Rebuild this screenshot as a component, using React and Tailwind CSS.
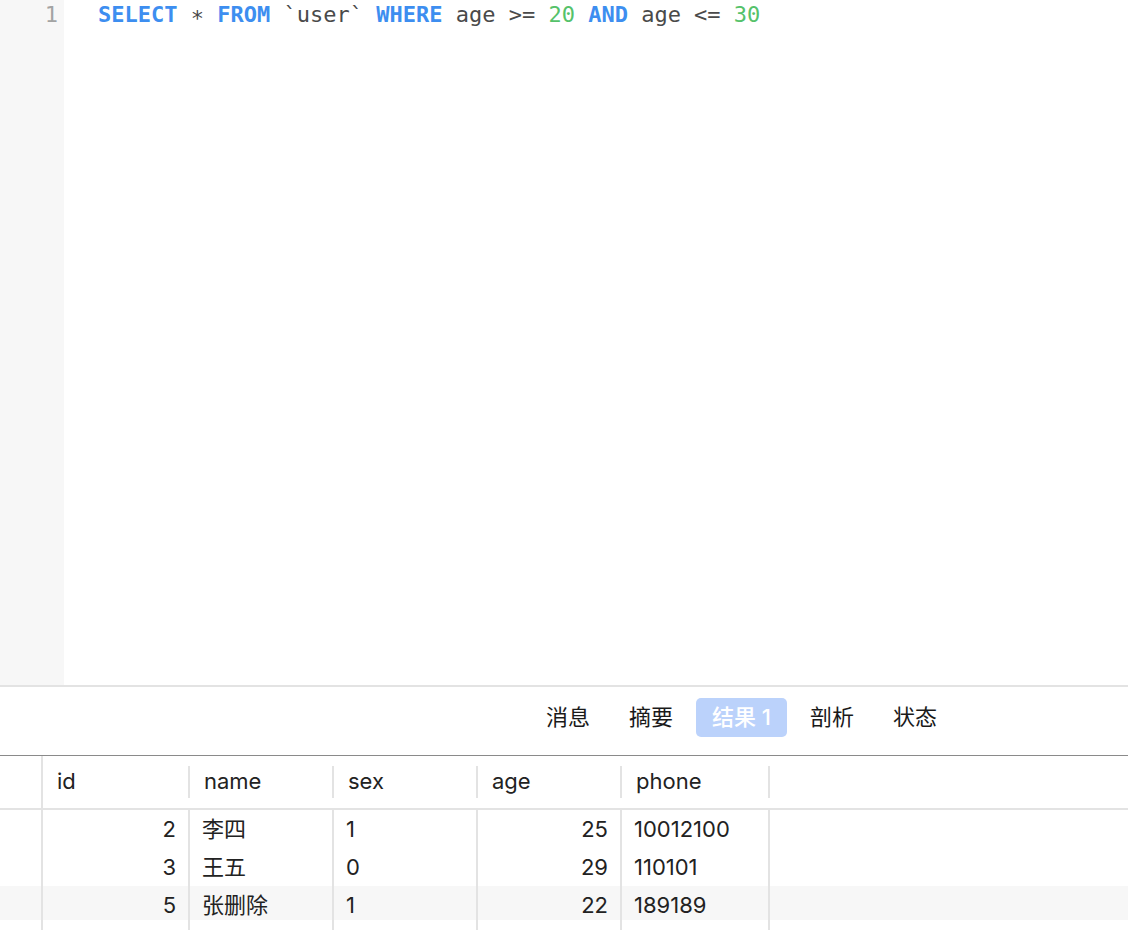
import React from "react";

const mono = { fontFamily: '"DejaVu Sans Mono", "Liberation Mono", monospace' };

function Code() {
  const kw = "text-[#3d8ef0] font-bold";
  const id = "text-[#4a4a4a]";
  const num = "text-[#55c26a]";
  return (
    <div className="flex h-[685px]">
      <div className="w-[64px] bg-[#f7f7f7] flex justify-end pr-[6px]">
        <div className="text-[22px] leading-[30px] text-[#a3a3a3]" style={mono}>1</div>
      </div>
      <div className="flex-1 pl-[34px]">
        <div className="text-[22px] leading-[30px] whitespace-pre" style={mono}>
          <span className={kw}>SELECT</span>
          <span className={id}> </span>
          <span className={id + " relative top-[4px]"}>*</span>
          <span className={id}> </span>
          <span className={kw}>FROM</span>
          <span className={id}> `user` </span>
          <span className={kw}>WHERE</span>
          <span className={id}> age &gt;= </span>
          <span className={num}>20</span>
          <span className={id}> </span>
          <span className={kw}>AND</span>
          <span className={id}> age &lt;= </span>
          <span className={num}>30</span>
        </div>
      </div>
    </div>
  );
}

const ui = { fontFamily: 'Inter, "Noto Sans CJK SC", sans-serif' };

function Tabs() {
  const tabs = ["消息", "摘要", "结果 1", "剖析", "状态"];
  return (
    <div className="h-[71px] border-t-2 border-t-[#e3e3e3] border-b border-b-[#8a8a8a] flex items-start justify-end pr-[175px] pt-[11px] gap-[7px]" style={ui}>
      {tabs.map((t) => (
        <div
          key={t}
          className={
            "h-[39px] px-4 rounded-[5px] flex items-center text-[22px] " +
            (t === "结果 1" ? "bg-[#bbd2fb] text-white font-medium" : "text-[#1a1a1a]")
          }
        >
          {t}
        </div>
      ))}
    </div>
  );
}

const cols = [
  { name: "id", w: "w-[147px]", right: true },
  { name: "name", w: "w-[144px]" },
  { name: "sex", w: "w-[144px]" },
  { name: "age", w: "w-[144px]", right: true },
  { name: "phone", w: "w-[148px]" },
];

const rows = [
  ["2", "李四", "1", "25", "10012100"],
  ["3", "王五", "0", "29", "110101"],
  ["5", "张删除", "1", "22", "189189"],
];

function Table() {
  return (
    <div className="text-[22px] text-[#222]" style={ui}>
      <div className="flex h-[54px] border-b-2 border-[#e3e3e3]">
        <div className="w-[43px] border-r-2 border-[#e3e3e3]" />
        {cols.map((c) => (
          <div key={c.name} className={c.w + " flex items-center justify-between pl-[14px]"}>
            <span className="pb-[2px]">{c.name}</span>
            <div className="w-[2px] h-[32px] bg-[#e3e3e3]" />
          </div>
        ))}
        <div className="flex-1" />
      </div>
      {rows.map((r, i) => (
        <div
          key={i}
          className={"flex " + (i === 2 ? "h-[34px] bg-[#f7f7f7]" : "h-[38px]")}
        >
          <div className="w-[43px] border-r-2 border-[#e3e3e3]" />
          {cols.map((c, j) => (
            <div
              key={j}
              className={
                c.w +
                " border-r-2 border-[#e3e3e3] flex items-center " +
                (c.right ? "justify-end pr-[12px]" : "pl-[12px]") +
                (i === 2 ? " pt-[4px]" : "")
              }
            >
              {r[j]}
            </div>
          ))}
          <div className="flex-1" />
        </div>
      ))}
      <div className="flex h-[20px]">
        <div className="w-[43px] border-r-2 border-[#e3e3e3]" />
        {cols.map((c, j) => (
          <div key={j} className={c.w + " border-r-2 border-[#e3e3e3]"} />
        ))}
      </div>
    </div>
  );
}

export default function App() {
  return (
    <div className="w-[1128px] h-[930px] bg-white overflow-hidden">
      <Code />
      <Tabs />
      <Table />
    </div>
  );
}
